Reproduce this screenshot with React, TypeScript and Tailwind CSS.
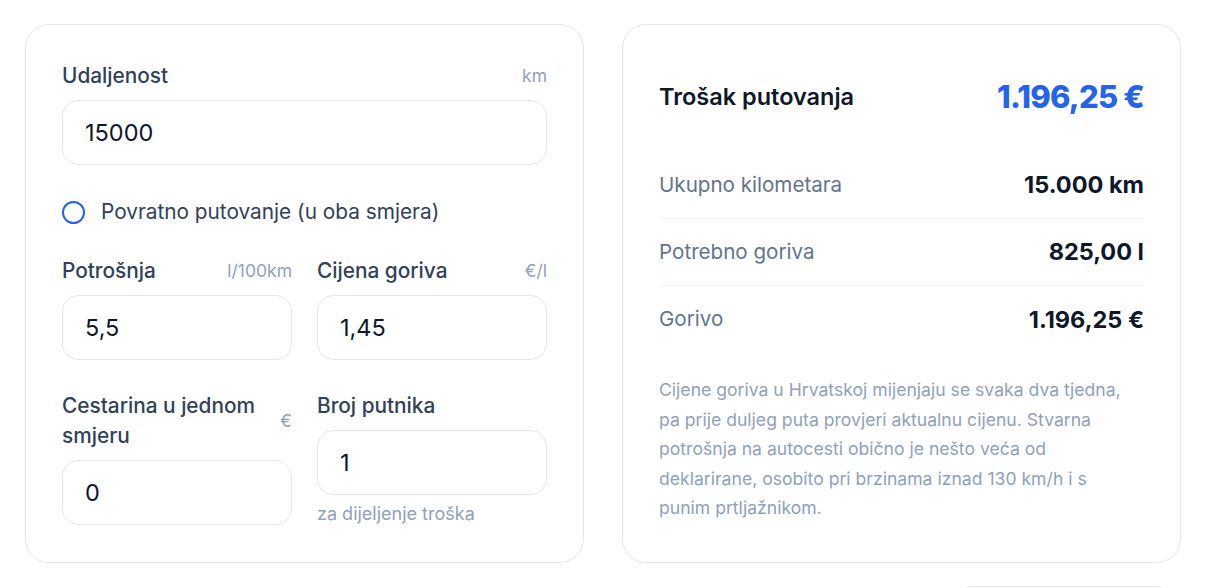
import { useState } from "react";

const font = { fontFamily: "Inter, 'Noto Sans', sans-serif" };

function Field({
  label,
  unit,
  value,
  hint,
}: {
  label: string;
  unit: string;
  value: string;
  hint?: string;
}) {
  return (
    <div className="flex flex-col">
      <div className="flex items-center justify-between gap-3 mb-[9px]">
        <span className="text-[20.8px] leading-[30px] font-medium text-slate-700">{label}</span>
        <span className="text-[17.5px] text-slate-400 shrink-0">{unit}</span>
      </div>
      <div className="h-[65px] rounded-[16px] border-[1.5px] border-gray-200 bg-white flex items-center px-[22px]">
        <span className="text-[23.5px] text-slate-900">{value}</span>
      </div>
      {hint && <span className="mt-[7px] text-[18px] leading-6 text-slate-400">{hint}</span>}
    </div>
  );
}

function Row({ label, value, last }: { label: string; value: string; last?: boolean }) {
  return (
    <div className={`flex items-center justify-between h-[67px] ${last ? "" : "border-b border-slate-100"}`}>
      <span className="text-[20.6px] text-slate-500">{label}</span>
      <span className="text-[23.5px] font-bold text-slate-900">{value}</span>
    </div>
  );
}

export default function App() {
  const [roundTrip, setRoundTrip] = useState(false);

  return (
    <div className="min-h-screen bg-white overflow-hidden" style={font}>
      <div className="grid grid-cols-2 gap-[38px] px-[25px] pt-[24px]">
        {/* Inputs */}
        <div className="rounded-[24px] border border-gray-200 px-[36px] pt-[36px] pb-[36px]">
          <Field label="Udaljenost" unit="km" value="15000" />

          <button
            onClick={() => setRoundTrip(!roundTrip)}
            className="flex items-center gap-[16px] mt-[33px] mb-[30px] h-[28px]"
          >
            <span className="w-[23px] h-[23px] rounded-full border-2 border-[#2563eb] flex items-center justify-center">
              {roundTrip && <span className="w-[11px] h-[11px] rounded-full bg-[#2563eb]" />}
            </span>
            <span className="text-[20.8px] text-slate-700">Povratno putovanje (u oba smjera)</span>
          </button>

          <div className="grid grid-cols-2 gap-x-[25px] gap-y-[31px] items-start">
            <Field label="Potrošnja" unit="l/100km" value="5,5" />
            <Field label="Cijena goriva" unit="€/l" value="1,45" />
            <Field label="Cestarina u jednom smjeru" unit="€" value="0" />
            <Field label="Broj putnika" unit="" value="1" hint="za dijeljenje troška" />
          </div>
        </div>

        {/* Result */}
        <div className="rounded-[24px] border border-gray-200 px-[36px] pt-[36px] pb-[36px]">
          <div className="flex items-center justify-between h-[72px] mb-[19px]">
            <span className="text-[23.5px] font-semibold text-slate-900">Trošak putovanja</span>
            <span className="text-[31px] font-extrabold tracking-tight text-[#2563eb]">1.196,25 €</span>
          </div>
          <Row label="Ukupno kilometara" value="15.000 km" />
          <Row label="Potrebno goriva" value="825,00 l" />
          <Row label="Gorivo" value="1.196,25 €" last />
          <p className="mt-[22px] pr-[20px] text-[17.6px] leading-[29.5px] text-slate-400">
            Cijene goriva u Hrvatskoj mijenjaju se svaka dva tjedna, pa prije duljeg puta provjeri aktualnu cijenu.
            Stvarna potrošnja na autocesti obično je nešto veća od deklarirane, osobito pri brzinama iznad 130 km/h i
            s punim prtljažnikom.
          </p>
        </div>
      </div>
      <div className="flex justify-end pr-[38px] pt-[23px]">
        <div className="w-[208px] h-[40px] rounded-[12px] border border-gray-200" />
      </div>
    </div>
  );
}
